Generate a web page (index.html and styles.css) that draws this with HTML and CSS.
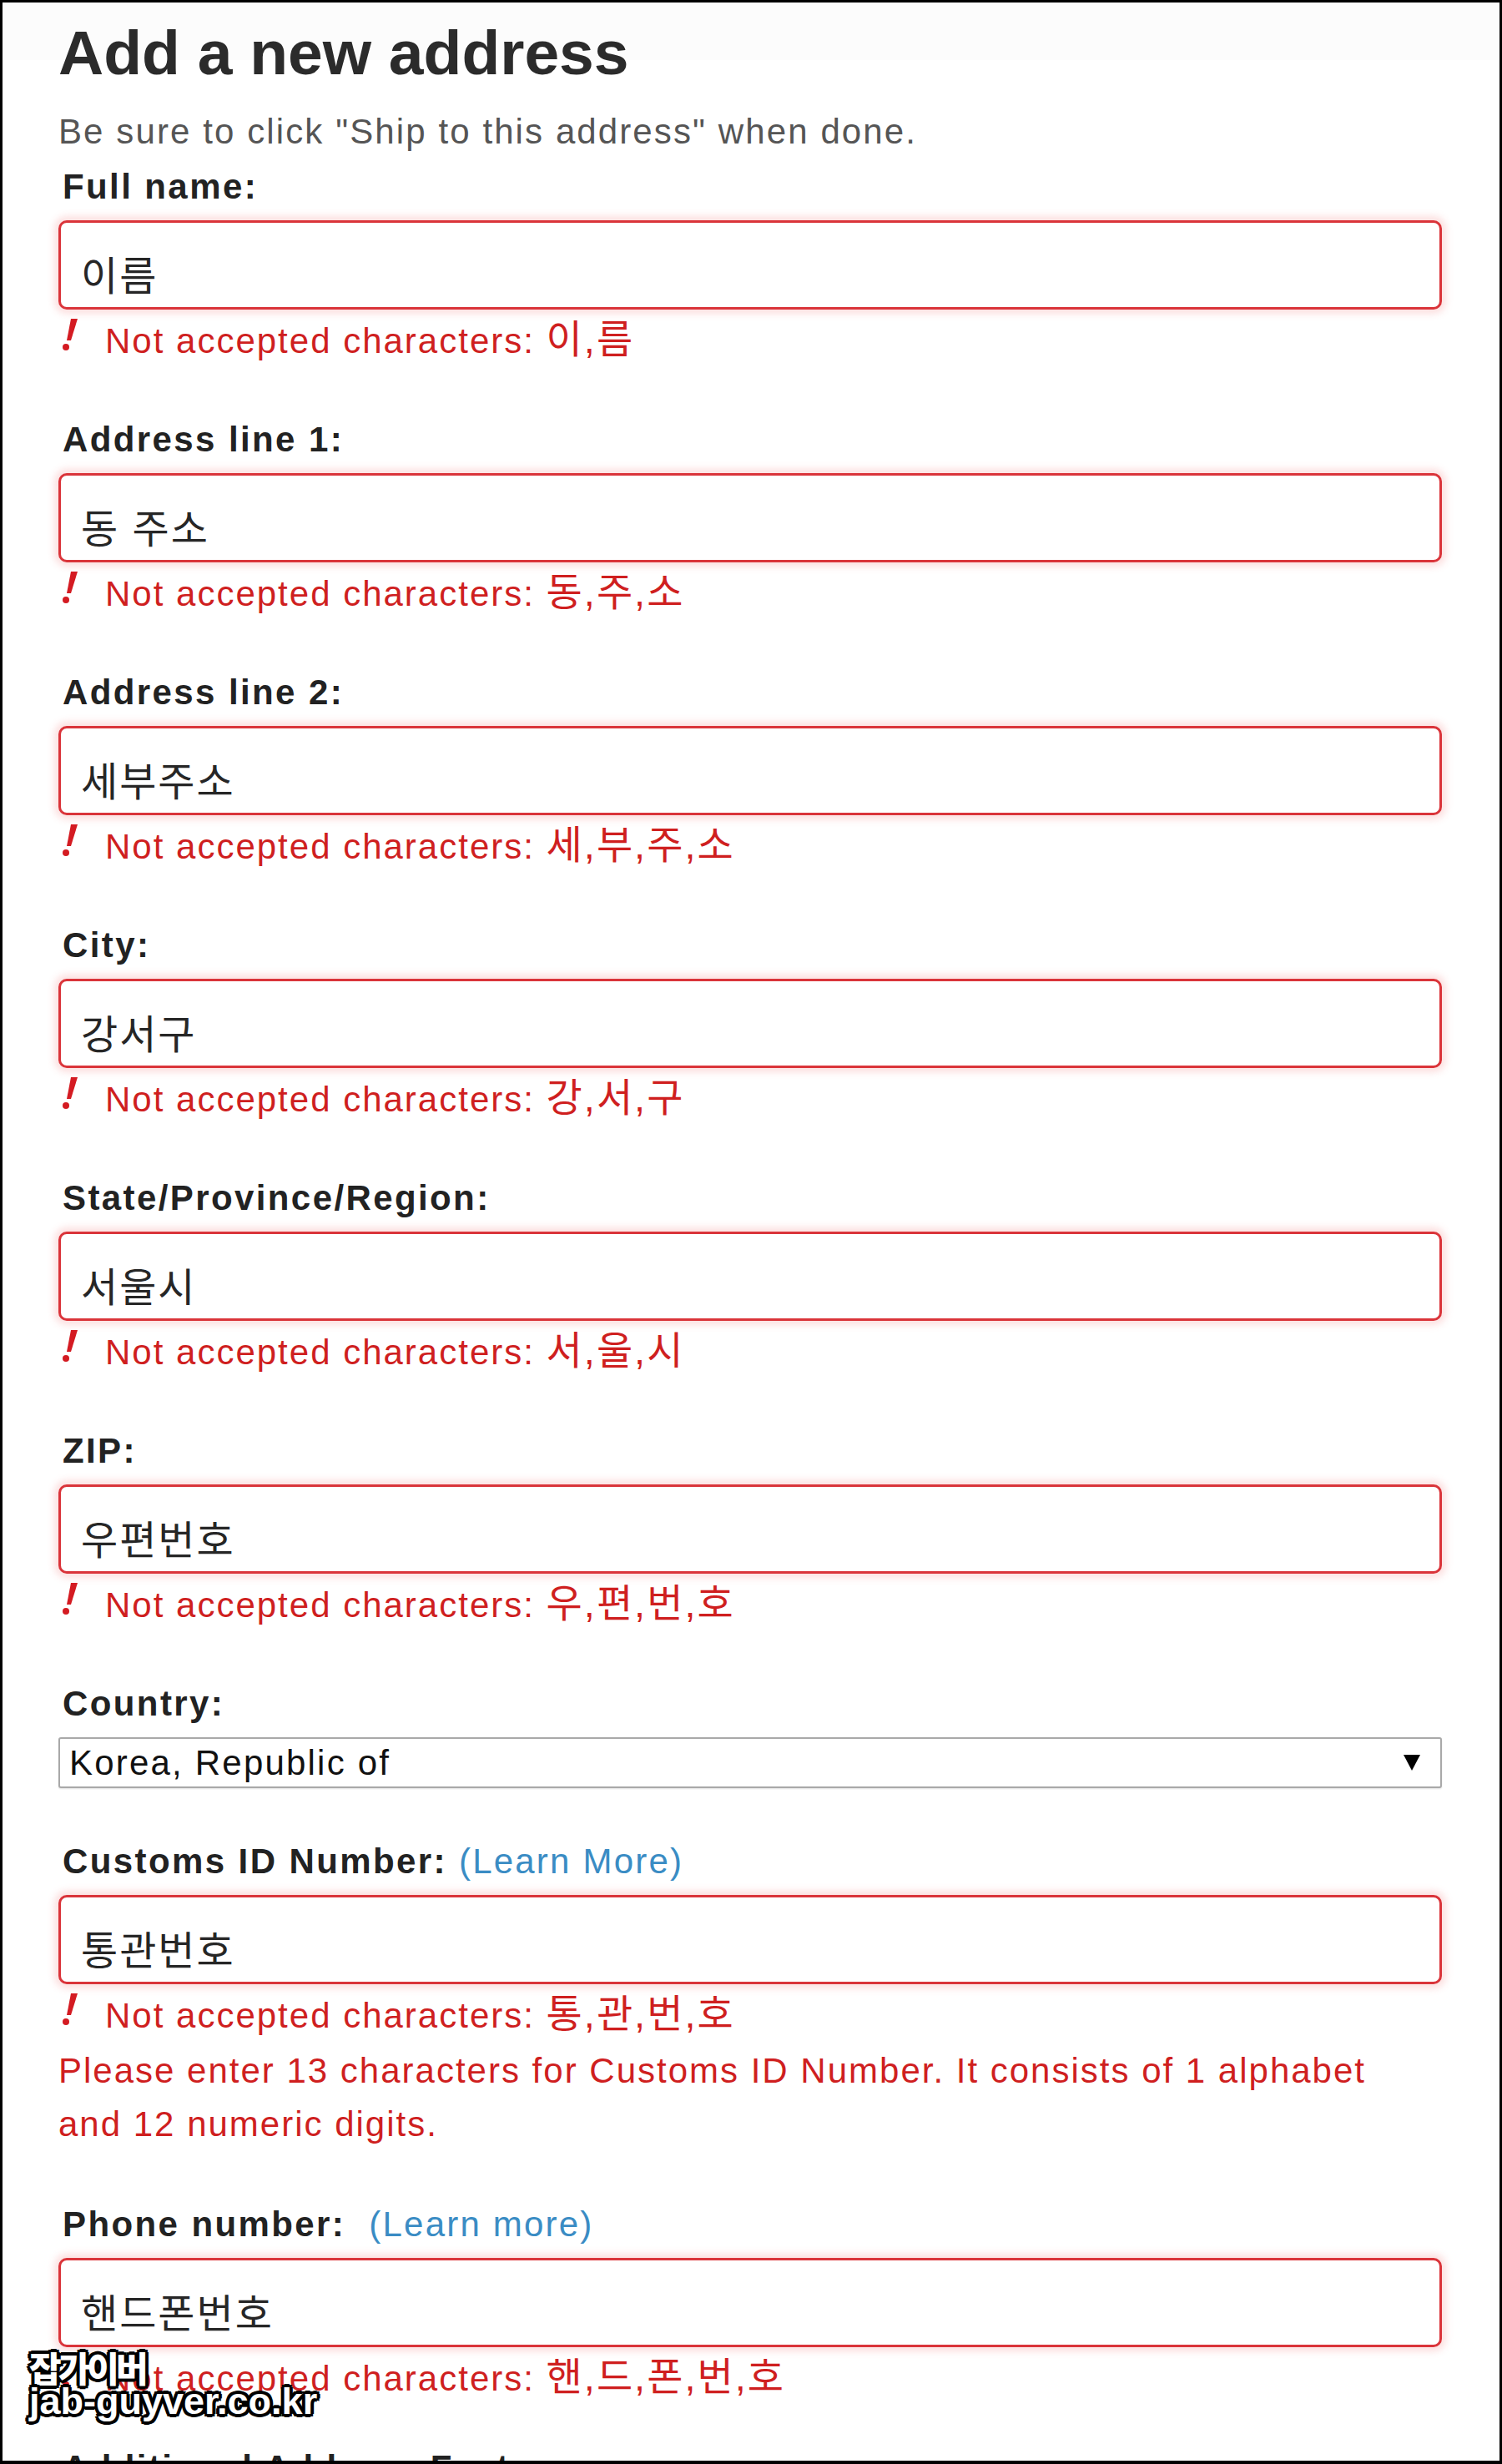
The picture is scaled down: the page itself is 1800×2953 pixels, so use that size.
FILE: index.html
```html
<!DOCTYPE html>
<html lang="en">
<head>
<meta charset="utf-8">
<title>Add a new address</title>
<link rel="stylesheet" href="styles.css">
</head>
<body>
<div class="page">
  <h1 class="title">Add a new address</h1>
  <p class="hint">Be sure to click "Ship to this address" when done.</p>

  <form class="form">
    <div class="field">
      <label class="label">Full name:</label>
      <input class="input" type="text" value="이름">
      <div class="err"><span class="err-icon"><svg viewBox="0 0 18 38"><polygon points="10,0 18,0 10,26 5,26"/><circle cx="4" cy="34" r="4"/></svg></span><span>Not accepted characters: <span class="ko">이,름</span></span></div>
    </div>

    <div class="field">
      <label class="label">Address line 1:</label>
      <input class="input" type="text" value="동 주소">
      <div class="err"><span class="err-icon"><svg viewBox="0 0 18 38"><polygon points="10,0 18,0 10,26 5,26"/><circle cx="4" cy="34" r="4"/></svg></span><span>Not accepted characters: <span class="ko">동,주,소</span></span></div>
    </div>

    <div class="field">
      <label class="label">Address line 2:</label>
      <input class="input" type="text" value="세부주소">
      <div class="err"><span class="err-icon"><svg viewBox="0 0 18 38"><polygon points="10,0 18,0 10,26 5,26"/><circle cx="4" cy="34" r="4"/></svg></span><span>Not accepted characters: <span class="ko">세,부,주,소</span></span></div>
    </div>

    <div class="field">
      <label class="label">City:</label>
      <input class="input" type="text" value="강서구">
      <div class="err"><span class="err-icon"><svg viewBox="0 0 18 38"><polygon points="10,0 18,0 10,26 5,26"/><circle cx="4" cy="34" r="4"/></svg></span><span>Not accepted characters: <span class="ko">강,서,구</span></span></div>
    </div>

    <div class="field">
      <label class="label">State/Province/Region:</label>
      <input class="input" type="text" value="서울시">
      <div class="err"><span class="err-icon"><svg viewBox="0 0 18 38"><polygon points="10,0 18,0 10,26 5,26"/><circle cx="4" cy="34" r="4"/></svg></span><span>Not accepted characters: <span class="ko">서,울,시</span></span></div>
    </div>

    <div class="field">
      <label class="label">ZIP:</label>
      <input class="input" type="text" value="우편번호">
      <div class="err"><span class="err-icon"><svg viewBox="0 0 18 38"><polygon points="10,0 18,0 10,26 5,26"/><circle cx="4" cy="34" r="4"/></svg></span><span>Not accepted characters: <span class="ko">우,편,번,호</span></span></div>
    </div>

    <div class="field field-select">
      <label class="label">Country:</label>
      <div class="select"><span>Korea, Republic of</span><span class="caret"></span></div>
    </div>

    <div class="field field-customs">
      <label class="label">Customs ID Number: <a class="learn" href="#">(Learn More)</a></label>
      <input class="input" type="text" value="통관번호">
      <div class="err"><span class="err-icon"><svg viewBox="0 0 18 38"><polygon points="10,0 18,0 10,26 5,26"/><circle cx="4" cy="34" r="4"/></svg></span><span>Not accepted characters: <span class="ko">통,관,번,호</span></span></div>
      <p class="note">Please enter 13 characters for Customs ID Number. It consists of 1 alphabet and 12 numeric digits.</p>
    </div>

    <div class="field field-last">
      <label class="label">Phone number:&nbsp; <a class="learn" href="#">(Learn more)</a></label>
      <input class="input" type="text" value="핸드폰번호">
      <div class="err"><span class="err-icon"><svg viewBox="0 0 18 38"><polygon points="10,0 18,0 10,26 5,26"/><circle cx="4" cy="34" r="4"/></svg></span><span>Not accepted characters: <span class="ko">핸,드,폰,번,호</span></span></div>
    </div>

    <div class="label">Additional Address Features:</div>
  </form>

  <div class="watermark">
    <div class="wm-ko">잡가이버</div>
    <div class="wm-en">jab-guyver.co.kr</div>
  </div>
</div>
</body>
</html>
```

FILE: styles.css
```css
* {
  box-sizing: border-box;
}

html,
body {
  margin: 0;
}

body {
  background: #000;
  padding: 3px 3px 4px 3px;
  height: 2953px;
  overflow: hidden;
  font-family: "Liberation Sans", Arial, "Noto Sans CJK KR", sans-serif;
}

.page {
  position: relative;
  height: 100%;
  overflow: hidden;
  background: #fff linear-gradient(#fcfcfc, #fcfcfc) no-repeat 0 0 / 100% 69px;
  padding: 0 69px 0 67px;
}

.title {
  margin: 20px 0 0;
  font-size: 75px;
  line-height: 80px;
  font-weight: bold;
  color: #2b2b2b;
}

.hint {
  margin: 30px 0 0;
  font-size: 42px;
  line-height: 50px;
  letter-spacing: 2.1px;
  color: #555;
}

.form {
  margin-top: 16px;
}

.field {
  margin-bottom: 61px;
}

.field-select {
  margin-bottom: 63px;
}

.field-customs {
  margin-bottom: 63px;
}

.field-last {
  margin-bottom: 50px;
}

.label {
  display: block;
  padding-left: 5px;
  margin-bottom: 15px;
  font-size: 42px;
  line-height: 50px;
  font-weight: bold;
  letter-spacing: 2.4px;
  color: #222;
  white-space: nowrap;
}

.learn {
  font-weight: normal;
  color: #3a8cc4;
  text-decoration: none;
  letter-spacing: 2.2px;
}

.input {
  display: block;
  width: 100%;
  height: 107px;
  margin: 0;
  border: 3px solid #da343a;
  border-radius: 10px;
  box-shadow: 0 0 8px 5px rgba(240, 110, 110, 0.22);
  padding: 18px 0 0 24px;
  font-family: "Liberation Sans", "Noto Sans CJK KR", sans-serif;
  font-size: 48px;
  letter-spacing: 2px;
  color: #262626;
  background: #fff;
  outline: none;
}

.err {
  display: flex;
  margin-top: 6px;
  font-size: 42px;
  line-height: 64px;
  letter-spacing: 2px;
  color: #cf1f1f;
  white-space: nowrap;
}

.ko {
  font-size: 47px;
  line-height: 0;
}

.err-icon {
  flex: none;
  width: 56px;
  padding: 5px 0 0 5px;
  line-height: 0;
}

.err-icon svg {
  display: block;
  width: 18px;
  height: 38px;
  fill: #d41b22;
}

.note {
  margin: 2px 0 0;
  max-width: 1610px;
  font-size: 42px;
  line-height: 64px;
  letter-spacing: 2px;
  color: #cf1f1f;
}

.select {
  display: flex;
  align-items: center;
  justify-content: space-between;
  height: 61px;
  border: 2px solid #a9a9a9;
  border-radius: 3px;
  padding: 0 24px 0 11px;
  font-size: 42px;
  letter-spacing: 2.2px;
  color: #111;
  background: #fff;
  box-shadow: 0 1px 2px rgba(0, 0, 0, 0.12);
}

.caret {
  width: 0;
  height: 0;
  border-left: 10px solid transparent;
  border-right: 10px solid transparent;
  border-top: 19px solid #000;
}

.watermark {
  position: absolute;
  left: 32px;
  top: 2813px;
  color: #fff;
  font-weight: bold;
  text-shadow:
    -3px -3px 0 #000, 3px -3px 0 #000, -3px 3px 0 #000, 3px 3px 0 #000,
    -4px 0 0 #000, 4px 0 0 #000, 0 -4px 0 #000, 0 4px 0 #000;
}

.wm-ko {
  font-family: "Noto Sans CJK KR", sans-serif;
  font-size: 42px;
  line-height: 42px;
  font-weight: 900;
  letter-spacing: -4px;
}

.wm-en {
  font-family: "Liberation Sans", Arial, sans-serif;
  font-size: 45px;
  line-height: 40px;
  letter-spacing: 0;
}
```
